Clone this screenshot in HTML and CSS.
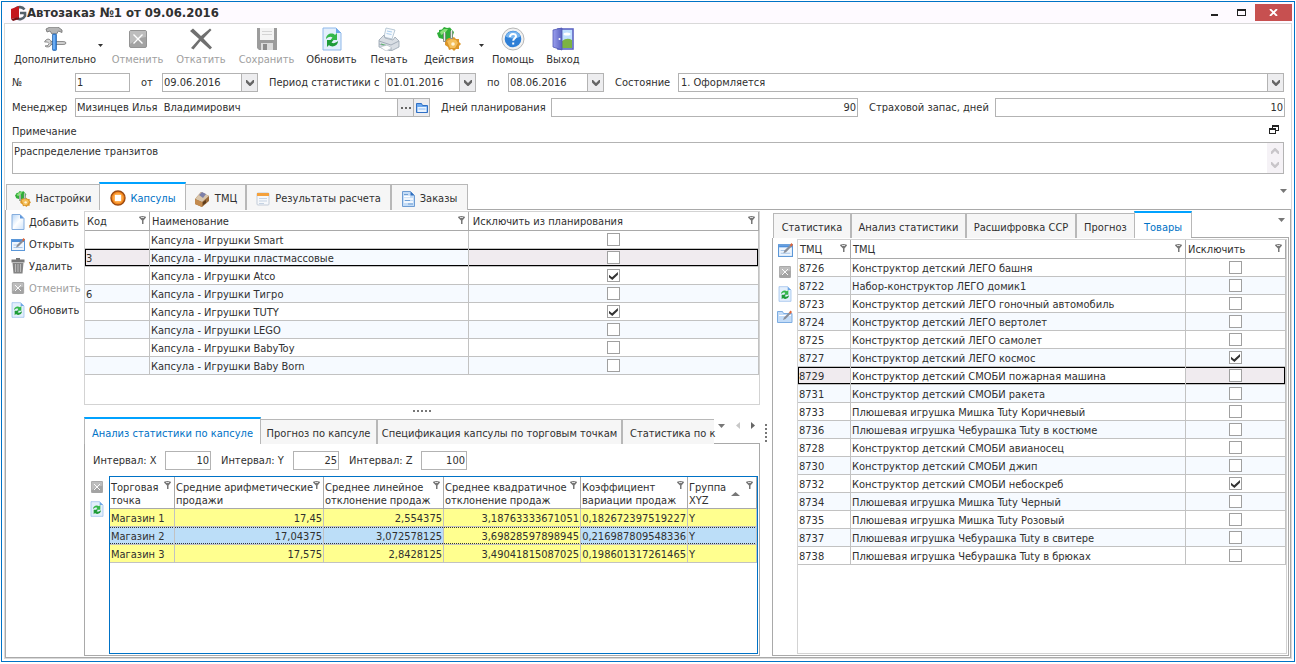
FILE: index.html
```html
<!DOCTYPE html>
<html lang="ru">
<head>
<meta charset="utf-8">
<title>Автозаказ №1 от 09.06.2016</title>
<link rel="stylesheet" href="styles.css">
</head>
<body>
<svg class="defs" aria-hidden="true">
  <defs>
    <linearGradient id="gPaper" x1="0" y1="0" x2="1" y2="1"><stop offset="0" stop-color="#b5d5f7"/><stop offset=".5" stop-color="#fff"/><stop offset="1" stop-color="#cfe3fa"/></linearGradient>
    <linearGradient id="gDoor" x1="0" y1="0" x2="1" y2="0"><stop offset="0" stop-color="#9a9fee"/><stop offset="1" stop-color="#5a62c0"/></linearGradient>
  </defs>
  <symbol id="i-filter" viewBox="0 0 7 8"><path d="M0 1.500Q0 0 3.500 0T7 1.500L4.500 4.500V8H3V4.500z" fill="#777"/><path d="M2 1.500h3" stroke="#ddd"/></symbol>
  <symbol id="i-tri" viewBox="0 0 7 4"><path d="M0 0h7L3.500 4z"/></symbol>
  <symbol id="i-chev" viewBox="0 0 8 6"><path d="M0 0h1l3 3 3-3h1v2.500L4.500 6h-1L0 2.500z"/></symbol>
  <symbol id="i-refresh" viewBox="0 0 20 24"><path d="M1 1h13l5 5v17H1z" fill="#e3effc" stroke="#8fb8ea"/><path d="M14 1l5 5h-5z" fill="#6ea6e6"/><path d="M4 12c0-5 6-7 9-4l2-2v7H8.500l2-2.500c-2-1.500-4-.5-6.500 1.500z" fill="#35b84a"/><path d="M16 14c0 5-6 7-9 4l-2 2v-7h6.500l-2 2.500c2 1.500 4 .5 6.500-1.500z" fill="#1f9c38"/></symbol>
  <symbol id="i-cancel" viewBox="0 0 18 18"><rect x=".5" y=".5" width="17" height="17" rx="1.500" fill="#a3a3a3" stroke="#949494"/><path d="M1 1h16v6Q8 8 1 14z" fill="#bdbdbd"/><path d="M4.500 4.500l9 9M13.500 4.500l-9 9" stroke="#fff" stroke-width="1.400"/></symbol>
  <symbol id="i-gears" viewBox="0 0 24 24"><path d="M0 6l2-1V3l3-.5L7 0l3 1 3-.5L15 3l2 2-1 3 0 3-4 1-5 3-1-3-4-1-1-2z" fill="#2fae38"/><path d="M3 5l4-3 4 0-3 4-4 2z" fill="#8be07a"/><path d="M8 14l2-2 2-1 3 0 2-1 2 2 3 0v3l2 2-2 2v3l-3 0-2 2-2-2-3 1-1-3-3-2z" fill="#dc9628"/><path d="M10 14l4-2 5 1 2 3-3 5-5 0z" fill="#f4bf5a"/><circle cx="16" cy="17" r="1.800" fill="#fff4d8"/><path d="M7.500 6v9M14.500 4v8" stroke="#8f8f8f" stroke-width="2.500"/><path d="M7.500 5v9M14.500 3v8" stroke="#e8e8e8"/></symbol>
  <symbol id="i-edit" viewBox="0 0 14 13"><rect x=".5" y="1.500" width="13" height="11" fill="#eef5fd" stroke="#5b97d8"/><path d="M1 2h12v2H1z" fill="#4d8fdb"/><path d="M2.500 7h5M2.500 9.500h9" stroke="#a9c6e8"/><path d="M5 9.500L6 7l5-5 1.500 1.500-5 5z" fill="#8a8f99"/><path d="M11 2l1.500-2L14 1.500l-1.500 2z" fill="#e0663a"/></symbol>
</svg>

<div class="window">
  <header class="title">
    <svg class="logo" width="17" height="16" viewBox="0 0 17 16"><path d="M14.500 4.500A6 6 0 1 0 15 11V8h-5" fill="none" stroke="#55606a" stroke-width="2.600"/><path d="M1 4l8-3v11l-8 2z" fill="#c4161c"/><path d="M1 14l8-2v2l-6 2z" fill="#7a0c10"/></svg>
    <h1>Автозаказ №1 от 09.06.2016</h1>
    <button class="win-btn" aria-label="Свернуть"><svg width="7" height="7"><path d="M0 5h7v2H0z" fill="#222"/></svg></button>
    <button class="win-btn" aria-label="Развернуть"><svg width="9" height="7"><path d="M0 0h9v7H0zM1 2v4h7V2z" fill="#222" fill-rule="evenodd"/></svg></button>
    <button class="win-btn close" aria-label="Закрыть"><svg width="9" height="7" viewBox="0 0 9 7"><path d="M1 0l7 7M8 0L1 7" stroke="#fff" stroke-width="1.800"/></svg></button>
  </header>

  <main class="frame">
    <div class="toolbar">
      <button class="tool w-extra"><svg width="24" height="24" viewBox="0 0 24 24"><path d="M3 2l4-2h8l4 3v2.500l-3.500-1.500-2 3H9L7 4 4 5z" fill="#b5b5b5" stroke="#6f6f6f" stroke-width=".8"/><path d="M5 12a4 4 0 1 1-3 7l3-.5 1-2-1.500-1.500-3 0q1-2.500 3.500-3z" fill="#d6d6d6" stroke="#777" stroke-width=".8"/><path d="M8 14.500h12q3 0 3 1.500t-3 1.500H8z" fill="#cfcfcf" stroke="#777" stroke-width=".8"/><rect x="9.500" y="7" width="4" height="16.500" rx="1" fill="#3f8be0" stroke="#1f5fa8" stroke-width=".7"/><path d="M11 8v14" stroke="#9dccff"/></svg><span>Дополнительно</span></button>
      <svg class="drop" width="5" height="3"><path d="M0 0h5L2.500 3z" fill="#333"/></svg>
      <button class="tool w-cancel" disabled><svg width="18" height="24"><use href="#i-cancel" width="18" height="18" y="3"/></svg><span>Отменить</span></button>
      <button class="tool w-undo" disabled><svg width="22" height="24" viewBox="0 0 22 24"><path d="M0 4l3-2.500 8 7.500 9-7.500 1.500 1.500-8 8.500L22 20.500 20 22.500l-9.500-8.500L3.500 22.500 1 21l8-9z" fill="#707070"/></svg><span>Откатить</span></button>
      <button class="tool w-save" disabled><svg width="22" height="24" viewBox="0 0 22 24"><path d="M1 1h20v22H3l-2-2z" fill="#9c9c9c"/><path d="M4 1h14v12H4z" fill="#f4f4f4"/><path d="M6 4.500h10M6 7.500h10" stroke="#d4d4d4"/><path d="M5 16h12v7H5z" fill="#dcdcdc"/><path d="M7 17h4v6H7z" fill="#8c8c8c"/></svg><span>Сохранить</span></button>
      <button class="tool w-refresh"><svg width="20" height="24"><use href="#i-refresh"/></svg><span>Обновить</span></button>
      <button class="tool w-print"><svg width="22" height="24" viewBox="0 0 22 24"><path d="M8 1l9 2-3 9-8-2z" fill="#f5f9fd" stroke="#a9bccc" stroke-width=".8"/><path d="M9 4l5 1M8.500 6.500l5 1" stroke="#a9cdee"/><path d="M1 13l5-5 1 3 8 2 2-3 4 4v6l-8 4-12-4z" fill="#d9dee4" stroke="#96a2ae" stroke-width=".8"/><path d="M1 14l12 4 8-4M1 17l12 4v3" fill="none" stroke="#a3adb8"/><path d="M3 17l7 2" stroke="#57b368"/><path d="M2 20l7-2 5 3-6 3z" fill="#fff" stroke="#b4bec8" stroke-width=".7"/></svg><span>Печать</span></button>
      <button class="tool w-actions"><svg width="24" height="24"><use href="#i-gears"/></svg><span>Действия</span></button>
      <svg class="drop" width="5" height="3"><path d="M0 0h5L2.500 3z" fill="#333"/></svg>
      <button class="tool w-help"><svg width="24" height="24" viewBox="0 0 24 24"><circle cx="12" cy="12" r="11" fill="#f2f2f2" stroke="#b8b8b8"/><circle cx="12" cy="12" r="8.300" fill="#2f7fd6"/><path d="M4.500 9.500a8 8 0 0 1 15 0q-7 4-15 0z" fill="#79b6f0"/><path d="M9 10c0-4 6-4 6-.8 0 2-2.800 2-2.800 4.600M12.200 15.600v2" fill="none" stroke="#fff" stroke-width="2"/></svg><span>Помощь</span></button>
      <button class="tool w-exit"><svg width="22" height="24" viewBox="0 0 22 24"><rect x="6" y="2" width="15" height="20" fill="#bfe0ff" stroke="#5f66c4" stroke-width="1.600"/><path d="M10 14q5-4 10-1v8H10z" fill="#7cb342"/><ellipse cx="15" cy="7" rx="3.500" ry="1.600" fill="#fff"/><path d="M1 3l9-2v22l-9-3z" fill="url(#gDoor)" stroke="#5158b4" stroke-width=".8"/><circle cx="7.500" cy="12" r="1" fill="#fff"/></svg><span>Выход</span></button>
    </div>

    <form class="form">
      <div class="row row-a">
        <label for="num">№</label><input class="box" id="num" value="1">
        <label for="d0">от</label><span class="combo"><input id="d0" value="09.06.2016"><button type="button" aria-label="Календарь"><svg width="8" height="6"><use href="#i-chev"/></svg></button></span>
        <label for="d1">Период статистики с</label><span class="combo"><input id="d1" value="01.01.2016"><button type="button" aria-label="Календарь"><svg width="8" height="6"><use href="#i-chev"/></svg></button></span>
        <label for="d2">по</label><span class="combo"><input id="d2" value="08.06.2016"><button type="button" aria-label="Календарь"><svg width="8" height="6"><use href="#i-chev"/></svg></button></span>
        <label for="st">Состояние</label><span class="combo"><select id="st"><option>1. Оформляется</option></select><span class="sel-btn"><svg width="8" height="6"><use href="#i-chev"/></svg></span></span>
      </div>
      <div class="row row-b">
        <label for="mgr">Менеджер</label><span class="combo"><input id="mgr" value="Мизинцев Илья  Владимирович"><button type="button" aria-label="Выбрать"><svg width="10" height="2"><path d="M0 0h2v2H0zM4 0h2v2H4zM8 0h2v2H8z"/></svg></button><button type="button" aria-label="Открыть карточку"><svg width="12" height="10" viewBox="0 0 12 10"><path d="M.5 9.500v-9h5l1 2h5v7z" fill="#6ba8ee" stroke="#2f6fc4"/><path d="M1.500 4h9v5h-9z" fill="#e9f3ff"/><path d="M2.500 6h7" stroke="#8fbcf0"/></svg></button></span>
        <label for="days">Дней планирования</label><input class="box num" id="days" value="90">
        <label for="res">Страховой запас, дней</label><input class="box num" id="res" value="10">
      </div>
      <div class="note-head">
        <label for="note">Примечание</label>
        <button type="button" class="plain" aria-label="Развернуть примечание"><svg width="10" height="9"><path d="M3 0h7v6H7V9H0V3h3zM4 3h3v2h2V2H4zM1 5v3h5V5z" fill="#222" fill-rule="evenodd"/></svg></button>
      </div>
      <div class="note"><textarea id="note">Рраспределение транзитов</textarea><div class="scroll"><svg class="up" width="8" height="6"><use href="#i-chev"/></svg><svg width="8" height="6"><use href="#i-chev"/></svg></div></div>
    </form>

    <nav class="tabs main-tabs">
      <button class="tab w-set"><svg width="16" height="16"><use href="#i-gears"/></svg>Настройки</button>
      <button class="tab active w-cap"><svg width="16" height="16" viewBox="0 0 16 16"><circle cx="8" cy="8" r="7" fill="#f58a1f" stroke="#9c4a10" stroke-width="1.400"/><circle cx="8" cy="8" r="4.800" fill="#ffb257"/><rect x="5" y="5" width="6" height="6" fill="#fff"/></svg>Капсулы</button>
      <button class="tab w-tmc"><svg width="16" height="16" viewBox="0 0 16 16"><path d="M1 8l6-7 8 4v5l-7 6-7-3z" fill="#9a6a3a"/><path d="M1 8l7 3 7-6-8-4z" fill="#d9c6ac"/><path d="M5 4l3-3 4 2-3 4z" fill="#7c7fa8"/><path d="M1 8l7 3v5l-7-3z" fill="#c48b4e"/><path d="M9 11l3-2v3l-3 2z" fill="#5d3c1c"/></svg>ТМЦ</button>
      <button class="tab w-res"><svg width="14" height="14" viewBox="0 0 14 14"><rect x="1" y="1" width="12" height="12" rx="1" fill="#f6f8fb" stroke="#c3ccd8"/><path d="M1 1h12v3H1z" fill="#f4a13c"/><path d="M3 6.500h8M3 9h8M3 11.500h5" stroke="#c5d3e3"/></svg>Результаты расчета</button>
      <button class="tab w-ord"><svg width="13" height="16" viewBox="0 0 13 16"><path d="M.5.5h8l4 4v11H.5z" fill="#c4dcf6" stroke="#6d9cd2"/><path d="M8.500.5l4 4h-4z" fill="#2f6fc0"/><path d="M2 5.500h6M2 8h9M2 11h9" stroke="#fff" stroke-width="1.500"/><path d="M2 3.500h4M3 9.500h5M6 13h5" stroke="#6f9fd4"/></svg>Заказы</button>
      <span class="rest"><svg width="7" height="4"><use href="#i-tri"/></svg></span>
    </nav>

    <section class="work">
      <div class="side">
        <button><svg width="14" height="16" viewBox="0 0 14 16"><path d="M1 .5h8l4 4v11H1z" fill="url(#gPaper)" stroke="#86aede"/><path d="M9 .5v4h4z" fill="#5f97dc"/></svg>Добавить</button>
        <button><svg width="14" height="13"><use href="#i-edit"/></svg>Открыть</button>
        <button><svg width="14" height="16" viewBox="0 0 14 16"><path d="M5 0h4v1.500h4.500v3H.5v-3H5z" fill="#777"/><path d="M1.500 5h11l-1 10.500h-9z" fill="#858585"/><path d="M4.500 6v8M7 6v8M9.500 6v8" stroke="#bcbcbc"/></svg>Удалить</button>
        <button disabled><svg width="12" height="12"><use href="#i-cancel"/></svg>Отменить</button>
        <button><svg width="14" height="16"><use href="#i-refresh"/></svg>Обновить</button>
      </div>

      <div class="left">
        <div class="grid">
          <table class="t-caps">
            <colgroup><col class="c-code"><col class="c-name"><col></colgroup>
            <thead><tr>
              <th><div>Код<svg width="7" height="8"><use href="#i-filter"/></svg></div></th>
              <th><div>Наименование<svg width="7" height="8"><use href="#i-filter"/></svg></div></th>
              <th><div class="wide">Исключить из планирования<svg width="7" height="8"><use href="#i-filter"/></svg></div></th>
            </tr></thead>
            <tbody>
              <tr><td></td><td>Капсула - Игрушки Smart</td><td><input type="checkbox" aria-label="Исключить"></td></tr>
              <tr class="sel"><td>3</td><td>Капсула - Игрушки пластмассовые</td><td><input type="checkbox" aria-label="Исключить"></td></tr>
              <tr><td></td><td>Капсула - Игрушки Atco</td><td><input type="checkbox" aria-label="Исключить" checked></td></tr>
              <tr><td>6</td><td>Капсула - Игрушки Тигро</td><td><input type="checkbox" aria-label="Исключить"></td></tr>
              <tr><td></td><td>Капсула - Игрушки TUTY</td><td><input type="checkbox" aria-label="Исключить" checked></td></tr>
              <tr><td></td><td>Капсула - Игрушки LEGO</td><td><input type="checkbox" aria-label="Исключить"></td></tr>
              <tr><td></td><td>Капсула - Игрушки BabyToy</td><td><input type="checkbox" aria-label="Исключить"></td></tr>
              <tr><td></td><td>Капсула - Игрушки Baby Born</td><td><input type="checkbox" aria-label="Исключить"></td></tr>
            </tbody>
          </table>
        </div>
        <div class="split-h"></div>
        <div class="lower">
          <nav class="tabs">
            <button class="tab active w-an">Анализ статистики по капсуле</button>
            <button class="tab w-fc">Прогноз по капсуле</button>
            <button class="tab w-sp">Спецификация капсулы по торговым точкам</button>
            <button class="tab cut">Статистика по к</button>
            <span class="rest arrows"><svg width="7" height="4"><use href="#i-tri"/></svg><svg width="4" height="7"><path d="M4 0v7L0 3.500z" fill="#c8c8c8"/></svg><svg width="4" height="7"><path d="M0 0v7l4-3.500z" fill="#666"/></svg></span>
          </nav>
          <div class="pane">
            <div class="intervals">
              <label for="ix">Интервал: X</label><input class="box num" id="ix" value="10">
              <label for="iy">Интервал: Y</label><input class="box num" id="iy" value="25">
              <label for="iz">Интервал: Z</label><input class="box num" id="iz" value="100">
            </div>
            <div class="pane-body">
              <div class="icons">
                <button class="plain" aria-label="Отменить" disabled><svg width="12" height="12"><use href="#i-cancel"/></svg></button>
                <button class="plain" aria-label="Обновить"><svg width="14" height="16"><use href="#i-refresh"/></svg></button>
              </div>
              <div class="grid focus">
                <table class="t-stat">
                  <colgroup><col class="s1"><col class="s2"><col class="s3"><col class="s4"><col class="s5"><col></colgroup>
                  <thead><tr>
                    <th><div>Торговая<br>точка<svg width="7" height="8"><use href="#i-filter"/></svg></div></th>
                    <th><div>Средние арифметические<br>продажи<svg width="7" height="8"><use href="#i-filter"/></svg></div></th>
                    <th><div>Среднее линейное<br>отклонение продаж<svg width="7" height="8"><use href="#i-filter"/></svg></div></th>
                    <th><div>Среднее квадратичное<br>отклонение продаж<svg width="7" height="8"><use href="#i-filter"/></svg></div></th>
                    <th><div>Коэффициент<br>вариации продаж<svg width="7" height="8"><use href="#i-filter"/></svg></div></th>
                    <th><div>Группа<br>XYZ<svg class="sort" width="9" height="4"><path d="M0 4h9L4.500 0z" fill="#777"/></svg><svg width="7" height="8"><use href="#i-filter"/></svg></div></th>
                  </tr></thead>
                  <tbody>
                    <tr><td>Магазин 1</td><td>17,45</td><td>2,554375</td><td>3,18763333671051</td><td>0,182672397519227</td><td>Y</td></tr>
                    <tr class="cur"><td>Магазин 2</td><td>17,04375</td><td>3,072578125</td><td class="cell">3,69828597898945</td><td>0,216987809548336</td><td>Y</td></tr>
                    <tr><td>Магазин 3</td><td>17,575</td><td>2,8428125</td><td>3,49041815087025</td><td>0,198601317261465</td><td>Y</td></tr>
                  </tbody>
                </table>
              </div>
            </div>
          </div>
        </div>
      </div>

      <div class="split-v"></div>

      <div class="right">
        <nav class="tabs">
          <button class="tab w-r1">Статистика</button>
          <button class="tab w-r2">Анализ статистики</button>
          <button class="tab w-r3">Расшифровка ССР</button>
          <button class="tab w-r4">Прогноз</button>
          <button class="tab active w-r5">Товары</button>
          <span class="rest"><svg width="7" height="4"><use href="#i-tri"/></svg></span>
        </nav>
        <div class="pane-r">
          <div class="icons">
            <button class="plain" aria-label="Изменить"><svg width="15" height="14"><use href="#i-edit"/></svg></button>
            <button class="plain" aria-label="Отменить" disabled><svg width="12" height="12"><use href="#i-cancel"/></svg></button>
            <button class="plain" aria-label="Обновить"><svg width="14" height="16"><use href="#i-refresh"/></svg></button>
            <button class="plain" aria-label="Открыть карточку"><svg width="16" height="14" viewBox="0 0 16 14"><path d="M.5 13.500v-11h5l1 2h8.500v9z" fill="#c3dcf8" stroke="#7dade2"/><path d="M2 6.500h12" stroke="#fff"/><path d="M6 11l1-2.500 5-5 1.500 1.500-5 5z" fill="#8a8f99"/><path d="M12 3.500l1.500-2L15 3l-1.500 2z" fill="#e0663a"/></svg></button>
          </div>
          <div class="grid">
            <table class="t-goods">
              <colgroup><col class="c-id"><col><col class="c-ex"></colgroup>
              <thead><tr>
                <th><div>ТМЦ<svg width="7" height="8"><use href="#i-filter"/></svg></div></th>
                <th><div>ТМЦ<svg width="7" height="8"><use href="#i-filter"/></svg></div></th>
                <th><div>Исключить<svg width="7" height="8"><use href="#i-filter"/></svg></div></th>
              </tr></thead>
              <tbody>
                <tr><td>8726</td><td>Конструктор детский ЛЕГО башня</td><td><input type="checkbox" aria-label="Исключить"></td></tr>
                <tr><td>8722</td><td>Набор-конструктор ЛЕГО домик1</td><td><input type="checkbox" aria-label="Исключить"></td></tr>
                <tr><td>8723</td><td>Конструктор детский ЛЕГО гоночный автомобиль</td><td><input type="checkbox" aria-label="Исключить"></td></tr>
                <tr><td>8724</td><td>Конструктор детский ЛЕГО вертолет</td><td><input type="checkbox" aria-label="Исключить"></td></tr>
                <tr><td>8725</td><td>Конструктор детский ЛЕГО самолет</td><td><input type="checkbox" aria-label="Исключить"></td></tr>
                <tr><td>8727</td><td>Конструктор детский ЛЕГО космос</td><td><input type="checkbox" aria-label="Исключить" checked></td></tr>
                <tr class="sel"><td>8729</td><td>Конструктор детский СМОБИ пожарная машина</td><td><input type="checkbox" aria-label="Исключить"></td></tr>
                <tr><td>8731</td><td>Конструктор детский СМОБИ ракета</td><td><input type="checkbox" aria-label="Исключить"></td></tr>
                <tr><td>8733</td><td>Плюшевая игрушка Мишка Tuty Коричневый</td><td><input type="checkbox" aria-label="Исключить"></td></tr>
                <tr><td>8736</td><td>Плюшевая игрушка Чебурашка Tuty в костюме</td><td><input type="checkbox" aria-label="Исключить"></td></tr>
                <tr><td>8728</td><td>Конструктор детский СМОБИ авианосец</td><td><input type="checkbox" aria-label="Исключить"></td></tr>
                <tr><td>8730</td><td>Конструктор детский СМОБИ джип</td><td><input type="checkbox" aria-label="Исключить"></td></tr>
                <tr><td>8732</td><td>Конструктор детский СМОБИ небоскреб</td><td><input type="checkbox" aria-label="Исключить" checked></td></tr>
                <tr><td>8734</td><td>Плюшевая игрушка Мишка Tuty Черный</td><td><input type="checkbox" aria-label="Исключить"></td></tr>
                <tr><td>8735</td><td>Плюшевая игрушка Мишка Tuty Розовый</td><td><input type="checkbox" aria-label="Исключить"></td></tr>
                <tr><td>8737</td><td>Плюшевая игрушка Чебурашка Tuty в свитере</td><td><input type="checkbox" aria-label="Исключить"></td></tr>
                <tr><td>8738</td><td>Плюшевая игрушка Чебурашка Tuty в брюках</td><td><input type="checkbox" aria-label="Исключить"></td></tr>
              </tbody>
            </table>
          </div>
        </div>
      </div>
    </section>
  </main>
</div>
</body>
</html>
```
FILE: styles.css
```css
* { box-sizing: border-box; }
body { margin: 0; height: 100vh; padding: 1px 1px 2px; display: flex; background: #fff; color: #303030; font: 11px/13px "DejaVu Sans Condensed", "DejaVu Sans", Tahoma, sans-serif; }
button, input, select, textarea { font: inherit; color: inherit; margin: 0; padding: 0; border: 0; border-radius: 0; background: none; outline: 0; }
svg { display: block; flex: none; }
.defs { position: absolute; width: 0; height: 0; }

.window { flex: 1; min-width: 0; display: flex; flex-direction: column; border: 1px solid #0072c6; }
.title { display: flex; align-items: center; height: 21px; padding: 0 2px 0 8px; background: #fefaff; }
.title h1 { flex: 1; margin: 0; font-size: 13px; line-height: 20px; font-weight: bold; }
.win-btn { width: 27px; height: 17px; display: flex; align-items: center; justify-content: center; }
.win-btn.close { width: 37px; background: #c75050; }
.frame { flex: 1; min-height: 0; margin: 0 2px 2px; border: 1px solid #d9d9d9; display: flex; flex-direction: column; }

.toolbar { display: flex; padding: 3px 0 0 7px; height: 49px; }
.tool { display: flex; flex-direction: column; align-items: center; gap: 2px; height: 43px; white-space: nowrap; }
.tool:disabled { color: #a0a0a0; }
.drop { margin-top: 17px; }
.w-extra { width: 86px; }
.w-cancel { width: 71px; }
.w-undo { width: 56px; }
.w-save { width: 75px; }
.w-refresh { width: 55px; }
.w-print { width: 60px; }
.w-actions { width: 60px; }
.w-extra + .drop, .w-actions + .drop { margin-right: -1px; }
.w-help { width: 60px; }
.w-exit { width: 40px; }

.form { padding: 0 6px 8px 7px; }
.row { display: grid; align-items: center; height: 19px; white-space: nowrap; }
.row-a { grid-template-columns: 63px 55px 32px 96px 127px 91px 32px 96px 74px 1fr; margin: 0 1px 6px 0; }
.row-b { grid-template-columns: 63px 355fr 121px 307fr 137px 290fr; }
.row label:not(:first-child) { padding-left: 11px; }
.box, .combo { height: 19px; min-width: 0; border: 1px solid #b3b3b3; background: #fff; }
.box { width: 100%; padding: 0 1px; }
.num { text-align: right; }
.combo { display: flex; }
.combo input, .combo select { flex: 1; min-width: 0; width: 0; padding: 0 1px; height: 17px; }
.combo select { appearance: none; padding-left: 2px; }
.combo button, .sel-btn { width: 16px; display: flex; align-items: center; justify-content: center; background: #ededef; border-left: 1px solid #b3b3b3; fill: #666; }
.note-head { display: flex; justify-content: space-between; align-items: center; height: 25px; padding: 4px 6px 0 0; }
.note-head button { padding-bottom: 4px; }
.note { display: flex; height: 32px; margin-right: 1px; border: 1px solid #b3b3b3; }
.note textarea { flex: 1; resize: none; overflow: hidden; padding: 2px 1px; }
.scroll { width: 16px; padding: 5px 0; background: #f5f2f6; display: flex; flex-direction: column; align-items: center; justify-content: space-between; fill: #c8c5c9; }
.up { transform: rotate(180deg); }
.plain { display: flex; }

.tabs { display: flex; height: 27px; }
.tab { display: flex; align-items: center; justify-content: center; gap: 5px; margin-top: 2px; padding-top: 3px; border: 1px solid #b8b8b8; border-bottom: 0; background: #f6f6f6; white-space: nowrap; flex: none; }
.tab.active { margin: 0 -1px 0 0; border-top: 2px solid #00a2ff; background: #fff; color: #0072c6; }
.tab:has(+ .active) { border-right: 0; }
.rest { flex: 1; display: flex; justify-content: flex-end; padding: 7px 4px 0 0; border-bottom: 1px solid #a9a9a9; fill: #777; }
.main-tabs { height: 28px; padding-left: 1px; }
.main-tabs .tab { padding-top: 2px; }
.w-set { width: 93px; }
.w-cap { width: 87px; }
.w-tmc { width: 61px; }
.w-res { width: 145px; }
.w-ord { width: 77px; }
.w-an { width: 177px; }
.w-fc { width: 117px; }
.w-sp { width: 245px; }
.tab.cut { flex: 0 1 92px; min-width: 0; justify-content: flex-start; padding-left: 7px; border-right: 0; }
.arrows { gap: 11px; padding: 5px 5px 0 0; align-items: flex-start; }
.arrows svg:first-child { margin-top: 2px; }
.w-r1 { width: 78px; margin-left: 1px; }
.w-r2 { width: 115px; }
.w-r3 { width: 110px; }
.w-r4 { width: 58px; }
.w-r5 { width: 58px; }

.work { flex: 1; min-height: 0; display: grid; grid-template-columns: 78px 676fr 12px 517fr; padding: 1px 1px 1px 0; border: 1px solid #a9a9a9; border-top: 0; }
.side button { display: flex; align-items: center; gap: 4px; height: 22px; padding-left: 5px; white-space: nowrap; }
.side svg { width: 14px; }
.side button:disabled { color: #a0a0a0; }
.left { display: grid; grid-template-rows: 194fr 12px 239fr; min-width: 0; min-height: 0; }
.grid { border: 1px solid #d3d3d3; min-width: 0; min-height: 0; overflow: hidden; }
.grid.focus { flex: 1; border-color: #0072c6; }
.split-h { height: 2px; width: 18px; margin: 5px auto; background: repeating-linear-gradient(90deg, #777 0 2px, transparent 2px 4px); }
.split-v { width: 2px; height: 18px; margin: 213px auto 0 5px; background: repeating-linear-gradient(#777 0 2px, transparent 2px 4px); }
.lower, .right { display: flex; flex-direction: column; min-width: 0; min-height: 0; }
.pane { flex: 1; min-height: 0; display: flex; flex-direction: column; border: 1px solid #a9a9a9; border-top: 0; padding: 0 1px 1px 0; }
.intervals { display: flex; align-items: center; height: 32px; padding-left: 8px; }
.intervals label { width: 72px; white-space: nowrap; }
.intervals .box { width: 46px; margin-right: 10px; }
.pane-body { flex: 1; min-height: 0; display: flex; }
.icons { width: 24px; display: flex; flex-direction: column; align-items: center; flex: none; }
.icons button { height: 22px; align-items: center; }
.pane-r { flex: 1; min-height: 0; display: flex; border: 1px solid #a9a9a9; border-top: 0; padding: 1px 1px 1px 0; }
.pane-r .grid { flex: 1; }

table { width: 100%; border-collapse: separate; border-spacing: 0; table-layout: fixed; }
th, td { padding: 2px 1px 0; height: 18px; border: solid #c2c2c2; border-width: 0 1px 1px 0; white-space: nowrap; overflow: hidden; line-height: 15px; }
th { height: 19px; padding: 0; font-weight: normal; text-align: left; line-height: 18px; border-color: #a9a9a9; }
th div { position: relative; padding: 1px 0 0 2px; height: 18px; }
th div.wide { padding-left: 4px; }
th svg { position: absolute; top: 4px; right: 3px; }
tbody tr:nth-child(even) { background: #f6faff; }
td:last-child { text-align: center; padding: 0; }
.c-code { width: 65px; }
.c-name { width: 47.3%; }
.c-id { width: 53px; }
.c-ex { width: 100px; }
.sel td { box-shadow: inset 0 1px #000, inset 0 -1px #000; }
.sel td:first-child { background: #f0ebef; box-shadow: inset 1px 1px #000, inset 0 -1px #000; }
.sel td:last-child { background: #f0ebef; box-shadow: inset -1px 1px #000, inset 0 -1px #000; }
input[type="checkbox"] { appearance: none; display: block; width: 13px; height: 13px; margin: 1px auto; border: 1px solid #a0a0a0; background: #fff; }
input[type="checkbox"]:checked::before { content: ""; display: block; width: 9px; height: 8px; margin: 2px 1px; background: #333; clip-path: polygon(0 35%, 35% 65%, 100% 0, 100% 35%, 38% 100%, 0 65%); }

.t-stat th, .t-stat th div { height: 32px; }
.t-stat th div { height: 31px; padding: 4px 0 0 1px; line-height: 13px; }
.t-stat th svg.sort { top: 15px; right: 16px; }
.t-stat tbody tr { background: #ffff8f; }
.t-stat td { padding: 2px 1px 0; text-align: right; }
.t-stat td:first-child, .t-stat td:last-child { text-align: left; }
.t-stat .cur td { background: repeating-linear-gradient(90deg, #333 0 1px, transparent 1px 2px) 0 0 / 100% 1px no-repeat, repeating-linear-gradient(90deg, #333 0 1px, transparent 1px 2px) 0 100% / 100% 1px no-repeat, #bcdef8; }
.t-stat .cur td.cell { background-color: #ffff8f; }
.s1 { width: 65px; }
.s2 { width: 149px; }
.s3 { width: 120px; }
.s4 { width: 137px; }
.s5 { width: 107px; }
```
